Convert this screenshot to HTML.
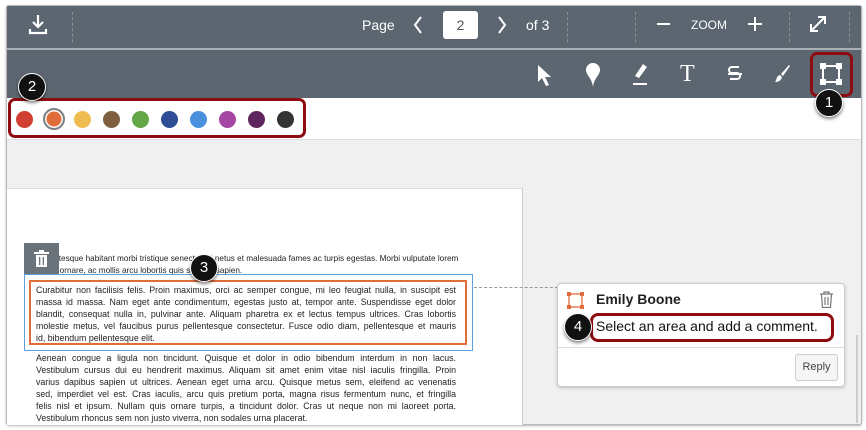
<!DOCTYPE html>
<html><head><style>
*{margin:0;padding:0;box-sizing:border-box}
body{width:866px;height:430px;background:#fff;font-family:"Liberation Sans",sans-serif;position:relative;overflow:hidden}
.a{position:absolute}
.frame{left:6px;top:5px;width:856px;height:420px;border:1px solid #b8b8b8;border-radius:3px;overflow:hidden;background:#f0f0f0;box-shadow:0 1px 2px rgba(0,0,0,.3)}
.tb{background:#5c6670}
.vd{border-left:1px dashed #8a939b;width:0}
.badge{width:28px;height:28px;border-radius:50%;background:#111;color:#fff;font-size:15px;text-align:center;line-height:26px;border:1.5px solid #fff;box-shadow:0 2px 3px rgba(0,0,0,.5)}
.dot{width:17px;height:17px;border-radius:50%;top:111px}
.txt{font-size:8.8px;line-height:12px;color:#222;width:420px}
.txt div{text-align:justify;text-align-last:justify;height:12px;overflow:visible}
.txt div.l{text-align-last:left}
.txt div.n{white-space:nowrap;text-align:left}
</style></head><body>
<div class="a frame"></div>
<div class="a tb" style="left:7px;top:6px;width:854px;height:42px"></div>
<div class="a" style="left:7px;top:48px;width:854px;height:2px;background:#aab0b5"></div>
<div class="a tb" style="left:7px;top:50px;width:854px;height:48px"></div>
<div class="a" style="left:7px;top:98px;width:854px;height:42px;background:#fff;border-bottom:1px solid #ddd"></div>
<svg class="a" style="left:27px;top:13px" width="22" height="24" viewBox="0 0 22 24" fill="none" stroke="#fff" stroke-width="2.2"><path d="M11 2v12M6 9l5 5 5-5M3 16v4h16v-4"/></svg>
<div class="a vd" style="left:72px;top:12px;height:30px"></div>
<div class="a" style="left:362px;top:17px;color:#fff;font-size:14px">Page</div>
<svg class="a" style="left:412px;top:15px" width="12" height="20"><path d="M9 2L3 10l6 8" stroke="#fff" stroke-width="2" fill="none"/></svg>
<div class="a" style="left:443px;top:11px;width:35px;height:28px;background:#fff;border-radius:3px;color:#555;font-size:14px;text-align:center;line-height:28px">2</div>
<svg class="a" style="left:496px;top:15px" width="12" height="20"><path d="M3 2l6 8-6 8" stroke="#fff" stroke-width="2" fill="none"/></svg>
<div class="a" style="left:526px;top:17px;color:#fff;font-size:14px">of 3</div>
<div class="a vd" style="left:567px;top:12px;height:30px"></div>
<div class="a vd" style="left:635px;top:12px;height:30px"></div>
<div class="a" style="left:657px;top:23px;width:13px;height:2px;background:#fff"></div>
<div class="a" style="left:691px;top:18px;color:#fff;font-size:12px">ZOOM</div>
<div class="a" style="left:748px;top:23px;width:14px;height:2px;background:#fff"></div>
<div class="a" style="left:754px;top:17px;width:2px;height:14px;background:#fff"></div>
<div class="a vd" style="left:789px;top:12px;height:30px"></div>
<svg class="a" style="left:808px;top:14px" width="20" height="20" fill="none" stroke="#fff" stroke-width="2"><path d="M3 17L17 3M10 3h7v7M3 10v7h7"/></svg>
<div class="a vd" style="left:849px;top:12px;height:30px"></div>
<svg class="a" style="left:536px;top:63px" width="16" height="24"><path d="M2 2v17l4-4 4 8 3-1-4-8h6z" fill="#fff"/></svg>
<svg class="a" style="left:584px;top:61px" width="18" height="28"><path d="M9 2a7 7 0 0 1 7 7c0 5-6 8-7 17-1-9-7-12-7-17a7 7 0 0 1 7-7z" fill="#fff"/></svg>
<svg class="a" style="left:631px;top:62px" width="18" height="26"><path d="M12 2l4 3-8 11-4-2z" fill="#fff"/><path d="M2 22h14" stroke="#fff" stroke-width="2"/></svg>
<div class="a" style="left:680px;top:61px;color:#fff;font-size:24px;font-family:'Liberation Serif',serif">T</div>
<svg class="a" style="left:726px;top:63px" width="18" height="24" fill="none" stroke="#fff" stroke-width="2"><path d="M13 4H6a3 3 0 0 0 0 6h5a3 3 0 0 1 0 6H4M2 11h14"/></svg>
<svg class="a" style="left:773px;top:63px" width="18" height="22"><path d="M16 2l1 1-7 10-2-2z" fill="#fff"/><path d="M7 12l2 2c-1 4-4 5-7 5 2-2 1-6 5-7z" fill="#fff"/></svg>
<svg class="a" style="left:820px;top:63px" width="22" height="22" fill="none"><rect x="3" y="3" width="16" height="16" stroke="#fff" stroke-width="2"/><g fill="#fff"><rect x="0" y="0" width="6" height="6"/><rect x="16" y="0" width="6" height="6"/><rect x="0" y="16" width="6" height="6"/><rect x="16" y="16" width="6" height="6"/></g></svg>
<div class="a" style="left:810px;top:52px;width:43px;height:45px;border:3px solid #8e0b12;border-radius:7px"></div>
<div class="a" style="left:8px;top:98px;width:298px;height:40px;border:3px solid #8e0b12;border-radius:7px"></div>
<div class="a dot" style="left:16px;background:#d13f32"></div>
<div class="a dot" style="left:43px;top:108px;width:22px;height:22px;border:2.5px solid #7a8088;background:#e06c3c;box-shadow:inset 0 0 0 1.5px #fff"></div>
<div class="a dot" style="left:74px;background:#efbc51"></div>
<div class="a dot" style="left:103px;background:#7e6040"></div>
<div class="a dot" style="left:132px;background:#63a646"></div>
<div class="a dot" style="left:161px;background:#2e4d94"></div>
<div class="a dot" style="left:190px;background:#4a90dc"></div>
<div class="a dot" style="left:219px;background:#a546a4"></div>
<div class="a dot" style="left:248px;background:#5f2560"></div>
<div class="a dot" style="left:277px;background:#333"></div>
<div class="a badge" style="left:18px;top:73px">2</div>
<div class="a badge" style="left:815px;top:89px">1</div>
<div class="a" style="left:7px;top:188px;width:516px;height:237px;background:#fff;border-top:1px solid #ddd;border-right:1px solid #ccc"></div>
<div class="a txt" style="left:36px;top:253px;font-size:8.2px"><div class="n">Pellentesque habitant morbi tristique senectus et netus et malesuada fames ac turpis egestas. Morbi vulputate lorem</div><div class="l">ut nisi ornare, ac mollis arcu lobortis quis semper sapien.</div></div>
<div class="a" style="left:24px;top:243px;width:35px;height:32px;background:#6b737a"></div>
<svg class="a" style="left:34px;top:250px" width="15" height="17" fill="#fff"><rect x="0" y="2" width="15" height="2"/><rect x="5" y="0" width="5" height="2"/><path d="M2 5h11v12H2z"/><rect x="5" y="7" width="1.3" height="8" fill="#6b737a"/><rect x="8.7" y="7" width="1.3" height="8" fill="#6b737a"/></svg>
<div class="a" style="left:24px;top:274px;width:449px;height:77px;border:1px solid #5aa0e0;background:#fff"></div>
<div class="a" style="left:29px;top:280px;width:438px;height:65px;border:2px solid #e06c3c"></div>
<div class="a txt" style="left:36px;top:284px"><div>Curabitur non facilisis felis. Proin maximus, orci ac semper congue, mi leo feugiat nulla, in suscipit est</div><div>massa id massa. Nam eget ante condimentum, egestas justo at, tempor ante. Suspendisse eget dolor</div><div>blandit, consequat nulla in, pulvinar ante. Aliquam pharetra ex et lectus tempus ultrices. Cras lobortis</div><div>molestie metus, vel faucibus purus pellentesque consectetur. Fusce odio diam, pellentesque et mauris</div><div class="l">id, bibendum pellentesque elit.</div></div>
<div class="a txt" style="left:36px;top:352px"><div>Aenean congue a ligula non tincidunt. Quisque et dolor in odio bibendum interdum in non lacus.</div><div>Vestibulum cursus dui eu hendrerit maximus. Aliquam sit amet enim vitae nisl iaculis fringilla. Proin</div><div>varius dapibus sapien ut ultrices. Aenean eget urna arcu. Quisque metus sem, eleifend ac venenatis</div><div>sed, imperdiet vel est. Cras iaculis, arcu quis pretium porta, magna risus fermentum nunc, et fringilla</div><div>felis nisl et ipsum. Nullam quis ornare turpis, a tincidunt dolor. Cras ut neque non mi laoreet porta.</div><div class="l">Vestibulum rhoncus sem non justo viverra, non sodales urna placerat.</div></div>
<div class="a badge" style="left:190px;top:254px">3</div>
<div class="a" style="left:474px;top:287px;width:84px;border-top:1px dashed #999"></div>
<div class="a" style="left:856px;top:335px;width:2px;height:88px;background:#ccc"></div>
<div class="a" style="left:557px;top:283px;width:288px;height:104px;background:#fff;border:1px solid #ccc;border-radius:4px;box-shadow:0 1px 3px rgba(0,0,0,.2)"></div>
<svg class="a" style="left:567px;top:292px" width="17" height="17" fill="none"><rect x="2" y="2" width="13" height="13" stroke="#e06c3c" stroke-width="1.3"/><g fill="#e06c3c"><rect x="0" y="0" width="4" height="4"/><rect x="13" y="0" width="4" height="4"/><rect x="0" y="13" width="4" height="4"/><rect x="13" y="13" width="4" height="4"/></g></svg>
<div class="a" style="left:596px;top:291px;font-size:14px;font-weight:bold;color:#222">Emily Boone</div>
<svg class="a" style="left:819px;top:291px" width="15" height="17" fill="none" stroke="#777" stroke-width="1.2"><path d="M1 3h13M5 3V1h5v2M2.5 3.5l1 13h8l1-13M6 6v8M9 6v8"/></svg>
<div class="a" style="left:590px;top:313px;width:244px;height:29px;border:3px solid #8e0b12;border-radius:8px"></div>
<div class="a" style="left:596px;top:318px;font-size:14px;color:#111">Select an area and add a comment.</div>
<div class="a badge" style="left:564px;top:313px">4</div>
<div class="a" style="left:558px;top:347px;width:286px;border-top:1px solid #ddd"></div>
<div class="a" style="left:795px;top:354px;width:43px;height:27px;background:#f5f5f5;border:1px solid #ccc;border-radius:3px;font-size:11px;color:#444;text-align:center;line-height:25px">Reply</div>
</body></html>
